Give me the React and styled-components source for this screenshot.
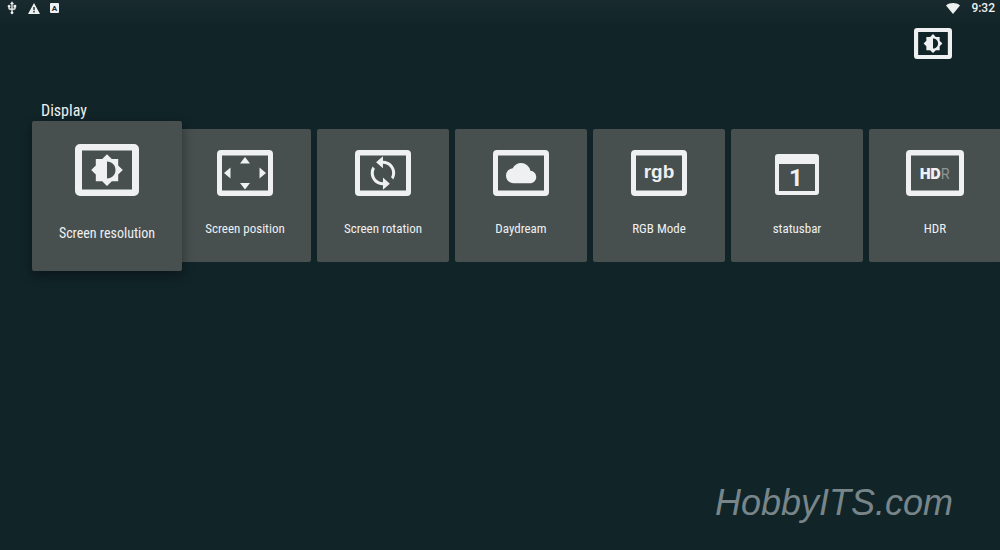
import React from "react";
import styled, { createGlobalStyle, css } from "styled-components";

const GlobalStyle = createGlobalStyle`
  * { box-sizing: border-box; }
  body {
    margin: 0;
    min-height: 100vh;
    background: #112428;
    color: #eef1f1;
    font-family: "Roboto Condensed", "Liberation Sans Narrow", Roboto, sans-serif;
    overflow-x: hidden;
  }
`;

const Screen = styled.div`
  display: flex;
  flex-direction: column;
  min-height: 100vh;
  overflow: hidden;
  background: linear-gradient(#182a2d, #112428 28px);
`;

const StatusBar = styled.header`
  display: flex;
  justify-content: space-between;
  align-items: center;
  height: 16px;
  padding: 0 5px 0 6px;
`;

const StatusGroup = styled.div`
  display: flex;
  align-items: center;
  gap: ${(p) => p.$gap}px;
`;

const Clock = styled.time`
  font: 500 12px/16px Roboto, sans-serif;
`;

const Toolbar = styled.div`
  display: flex;
  justify-content: flex-end;
  padding: 12px 48px 0 0;
`;

const IconButton = styled.button`
  display: flex;
  padding: 0;
  border: 0;
  background: none;
  color: #eef0f1;
`;

const Section = styled.main`
  flex: 1;
  padding: 42px 0 0 41px;
`;

const Heading = styled.h1`
  margin: 0;
  font-size: 16px;
  line-height: 20px;
  font-weight: 400;
`;

const CardRow = styled.div`
  display: flex;
  align-items: flex-start;
  gap: 6px;
  padding-top: 8px;
`;

const focusedCard = css`
  z-index: 1;
  width: 150px;
  height: 150px;
  margin: -8px -9px;
  padding-top: 23px;
  font-size: 14px;
  box-shadow: 0 4px 12px rgba(0, 0, 0, 0.4);
`;

const Card = styled.button`
  position: relative;
  flex: none;
  display: flex;
  flex-direction: column;
  align-items: center;
  width: 132px;
  height: 133px;
  padding: 21px 0 0;
  border: 0;
  border-radius: 2px;
  background: #474f4f;
  color: #eef0f1;
  font-family: inherit;
  font-size: 13px;
  line-height: 20px;
  ${(p) => p.$focused && focusedCard}
`;

const CardLabel = styled.span`
  margin-top: ${(p) => (p.$focused ? 27 : 23)}px;
`;

const Watermark = styled.footer`
  padding: 0 47px 27px;
  text-align: right;
  font: italic 36px/40px "Liberation Sans", Arial, sans-serif;
  color: #78868a;
`;

const UsbIcon = () => (
  <svg width="12" height="14" viewBox="2 0 20 24" fill="currentColor" stroke="currentColor" strokeWidth="0.5" aria-hidden="true">
    <path d="M15 7v4h1v2h-3V5h2l-3-4-3 4h2v8H8v-2.070c.7-.37 1.200-1.080 1.200-1.930 0-1.210-.99-2.200-2.200-2.200S4.800 7.790 4.800 9c0 .85.5 1.560 1.200 1.930V13c0 1.110.89 2 2 2h3v3.050c-.71.37-1.200 1.100-1.200 1.950a2.200 2.200 0 0 0 4.400 0c0-.85-.49-1.580-1.200-1.950V15h3c1.110 0 2-.89 2-2v-2h1V7h-4z" />
  </svg>
);

const WarningIcon = () => (
  <svg width="12" height="11" viewBox="0 0 12 11" aria-hidden="true">
    <path d="M6 0 12 11H0z" fill="currentColor" />
    <path d="M5.300 4h1.400v3.200H5.300zM5.300 8h1.400v1.400H5.300z" fill="#182a2d" />
  </svg>
);

const KeyboardIcon = () => (
  <svg width="9" height="10" viewBox="0 0 9 10" aria-hidden="true">
    <rect width="9" height="10" rx="1" fill="currentColor" />
    <text x="4.500" y="7.700" textAnchor="middle" fontFamily="Roboto" fontWeight="700" fontSize="8" fill="#182a2d">A</text>
  </svg>
);

const WifiIcon = () => (
  <svg width="14" height="11" viewBox="0 0 14 11" fill="currentColor" aria-hidden="true">
    <path d="M7 11 0 2.500C4-.7 10-.7 14 2.500z" />
  </svg>
);

const Frame = ({ width = 56, height = 46, viewBox = "0 0 56 46", children }) => (
  <svg width={width} height={height} viewBox={viewBox} fill="currentColor" aria-hidden="true">
    {children}
  </svg>
);

const Border = ({ width = 56 }) => (
  <path
    fillRule="evenodd"
    d={`M4 0H${width - 4}a4 4 0 0 1 4 4V42a4 4 0 0 1-4 4H4a4 4 0 0 1-4-4V4a4 4 0 0 1 4-4zM5 5.500V40.500H${width - 5}V5.500z`}
  />
);

const BrightnessIcon = ({ width, height }) => (
  <Frame width={width} height={height} viewBox="0 0 64 52">
    <path fillRule="evenodd" d="M5 0H59a5 5 0 0 1 5 5V47a5 5 0 0 1-5 5H5a5 5 0 0 1-5-5V5a5 5 0 0 1 5-5zM7 6.500V45.500H57V6.500z" />
    <path
      fillRule="evenodd"
      d="M32 10.200 36.800 15H43.200V21.400L47.800 26 43.200 30.600V37.200H36.800L32 42 27.200 37.200H20.800V30.600L16.200 26 20.800 21.400V15H27.200zM32 17.600V34.600C37 34.600 40.500 31 40.500 26.100S37 17.600 32 17.600z"
    />
  </Frame>
);

const PositionIcon = () => (
  <Frame>
    <Border />
    <path d="M28 7l5 6.500H23zM28 39.500l5-6.500H23zM7 23l6.500-5.500v11zM49 23l-6.500-5.500v11z" />
  </Frame>
);

const RotationIcon = () => (
  <Frame>
    <Border />
    <g transform="translate(9.600 4.600) scale(1.530)">
      <path d="M12 4V1L7.500 5 12 9V6c3.310 0 6 2.690 6 6 0 1.010-.25 1.970-.7 2.800l1.460 1.460A7.930 7.930 0 0 0 20 12c0-4.420-3.580-8-8-8zm0 14c-3.310 0-6-2.690-6-6 0-1.010.25-1.970.7-2.800L5.240 7.740A7.930 7.930 0 0 0 4 12c0 4.420 3.580 8 8 8v3l4.500-4-4.500-4v3z" />
    </g>
  </Frame>
);

const CloudIcon = () => (
  <Frame>
    <Border />
    <path transform="translate(13 8) scale(1.260)" d="M19.350 10.040A7.490 7.490 0 0 0 12 4C9.110 4 6.600 5.640 5.350 8.040A5.994 5.994 0 0 0 0 14c0 3.310 2.690 6 6 6h13c2.760 0 5-2.240 5-5 0-2.640-2.050-4.780-4.650-4.960z" />
  </Frame>
);

const RgbIcon = () => (
  <Frame>
    <Border />
    <text x="28" y="28" textAnchor="middle" fontFamily="Liberation Sans" fontWeight="700" fontSize="19">rgb</text>
  </Frame>
);

const StatusbarIcon = () => (
  <Frame>
    <path fillRule="evenodd" d="M9 4H47a3 3 0 0 1 3 3V42a3 3 0 0 1-3 3H9a3 3 0 0 1-3-3V7a3 3 0 0 1 3-3zM10 14V41H46V14z" />
    <text x="27" y="36" textAnchor="middle" fontFamily="Roboto" fontWeight="700" fontSize="24">1</text>
  </Frame>
);

const HdrIcon = () => (
  <Frame width={58} viewBox="0 0 58 46">
    <Border width={58} />
    <text x="14" y="29" fontFamily="Inter" fontWeight="900" fontSize="14">
      HD<tspan fontWeight="400" fill="#8f9696">R</tspan>
    </text>
  </Frame>
);

const items = [
  { label: "Screen resolution", icon: <BrightnessIcon width={64} height={52} />, focused: true },
  { label: "Screen position", icon: <PositionIcon /> },
  { label: "Screen rotation", icon: <RotationIcon /> },
  { label: "Daydream", icon: <CloudIcon /> },
  { label: "RGB Mode", icon: <RgbIcon /> },
  { label: "statusbar", icon: <StatusbarIcon /> },
  { label: "HDR", icon: <HdrIcon /> },
];

export default function App() {
  return (
    <Screen>
      <GlobalStyle />
      <StatusBar>
        <StatusGroup $gap={10}>
          <UsbIcon />
          <WarningIcon />
          <KeyboardIcon />
        </StatusGroup>
        <StatusGroup $gap={11}>
          <WifiIcon />
          <Clock>9:32</Clock>
        </StatusGroup>
      </StatusBar>
      <Toolbar>
        <IconButton type="button" aria-label="Display">
          <BrightnessIcon width={38} height={31} />
        </IconButton>
      </Toolbar>
      <Section>
        <Heading>Display</Heading>
        <CardRow>
          {items.map(({ label, icon, focused }) => (
            <Card key={label} type="button" $focused={focused}>
              {icon}
              <CardLabel $focused={focused}>{label}</CardLabel>
            </Card>
          ))}
        </CardRow>
      </Section>
      <Watermark>HobbyITS.com</Watermark>
    </Screen>
  );
}
